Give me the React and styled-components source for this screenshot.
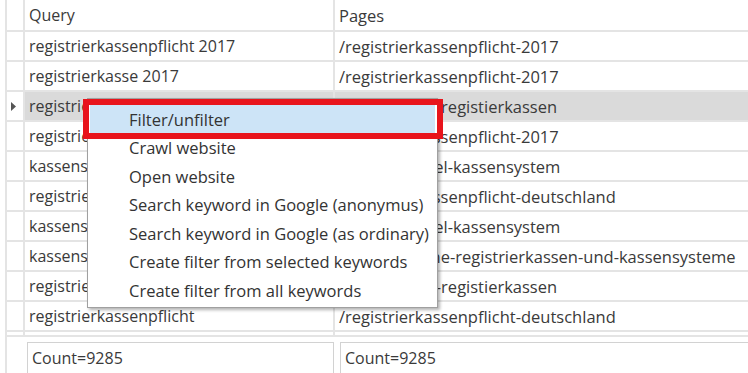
import React from 'react';
import styled, { createGlobalStyle } from 'styled-components';

const GlobalStyle = createGlobalStyle`
  html, body {
    margin: 0;
    background: #fff;
    overflow: hidden;
  }
  body {
    font-family: "Open Sans", "Noto Sans", sans-serif;
    color: #3a3a3a;
  }
`;

const rows = [
  { query: 'registrierkassenpflicht 2017', page: '/registrierkassenpflicht-2017' },
  { query: 'registrierkasse 2017', page: '/registrierkassenpflicht-2017' },
  { query: 'registrierkassen pflicht', page: '/regelung-zu-registierkassen', selected: true },
  { query: 'registrierkassenpflicht 2017', page: '/registrierkassenpflicht-2017' },
  { query: 'kassensystem', page: '/gastro-model-kassensystem' },
  { query: 'registrierkassenpflicht deutschland', page: '/registrierkassenpflicht-deutschland' },
  { query: 'kassensystem modell', page: '/gastro-model-kassensystem' },
  { query: 'kassensysteme', page: '/test-moderne-registrierkassen-und-kassensysteme' },
  { query: 'registrierkassen', page: '/regelung-zu-registierkassen' },
  { query: 'registrierkassenpflicht', page: '/registrierkassenpflicht-deutschland' },
];

const menuItems = [
  'Filter/unfilter',
  'Crawl website',
  'Open website',
  'Search keyword in Google (anonymus)',
  'Search keyword in Google (as ordinary)',
  'Create filter from selected keywords',
  'Create filter from all keywords',
];

const App = () => {
  return (
    <Page>
      <GlobalStyle />
      <Grid>
        <Row $height={32}>
          <HeadCell />
          <Cell>Query</Cell>
          <Cell $page>Pages</Cell>
        </Row>
        {rows.map((r, i) => (
          <Row key={`row${i}`} $height={30}>
            <HeadCell>
              {r.selected && (
                <svg width="6" height="9" viewBox="0 0 6 9">
                  <polygon points="0,0 5,4.5 0,9" fill="#555" />
                </svg>
              )}
            </HeadCell>
            <Cell $selected={r.selected}>{r.query}</Cell>
            <Cell $selected={r.selected} $page>{r.page}</Cell>
          </Row>
        ))}
        <Row $height={5}>
          <HeadCell />
          <Cell />
          <Cell />
        </Row>
      </Grid>
      <Footer>
        <CountBox>Count=9285</CountBox>
        <CountBox $wide>Count=9285</CountBox>
      </Footer>

      <Menu>
        {menuItems.map((m, i) => (
          <MenuItem key={`menu${i}`} $active={i === 0}>{m}</MenuItem>
        ))}
      </Menu>
      <Marker />
    </Page>
  );
};

const Page = styled.div`
  position: relative;
  width: 760px;
  height: 373px;
  overflow: hidden;
  margin-left: 5px;
  border-left: 2px solid #e4e4e4;
`;

const Grid = styled.div`
  display: flex;
  flex-direction: column;
`;

const Row = styled.div`
  display: grid;
  grid-template-columns: 18px 310px 1fr;
  height: ${(p) => p.$height}px;
  box-sizing: border-box;
  border-bottom: 2px solid #e4e4e4;
`;

const HeadCell = styled.div`
  display: flex;
  align-items: center;
  justify-content: flex-start;
  padding-left: 4px;
  border-right: 2px solid #e4e4e4;
`;

const Cell = styled.div`
  display: flex;
  align-items: center;
  padding-left: 4px;
  font-size: ${(p) => (p.$page ? '16.5px' : '16px')};
  white-space: nowrap;
  overflow: hidden;
  border-right: 2px solid #e4e4e4;
  background: ${(p) => (p.$selected ? '#dadada' : 'transparent')};
`;

const Footer = styled.div`
  display: flex;
  gap: 6px;
  padding: 5px 0 0 20px;
`;

const CountBox = styled.div`
  box-sizing: border-box;
  width: ${(p) => (p.$wide ? '420px' : '307px')};
  height: 40px;
  padding: 5px 4px;
  border: 1px solid #d2d2d2;
  font-size: 16px;
  line-height: 20px;
`;

const Menu = styled.div`
  position: absolute;
  left: 80px;
  top: 98px;
  width: 351px;
  box-sizing: border-box;
  padding: 6px 2px 2px;
  background: #fff;
  border: 1px solid #a0a0a0;
  box-shadow: 2px 2px 3px rgba(0, 0, 0, 0.3);
`;

const MenuItem = styled.div`
  height: 28.5px;
  display: flex;
  align-items: center;
  padding-left: 39px;
  font-size: 16.5px;
  color: #333;
  white-space: nowrap;
  background: ${(p) => (p.$active ? '#cde4f7' : 'transparent')};
`;

const Marker = styled.div`
  position: absolute;
  left: 76px;
  top: 99px;
  width: 360px;
  height: 40px;
  box-sizing: border-box;
  border: 6px solid #e8141c;
`;

export default App;
